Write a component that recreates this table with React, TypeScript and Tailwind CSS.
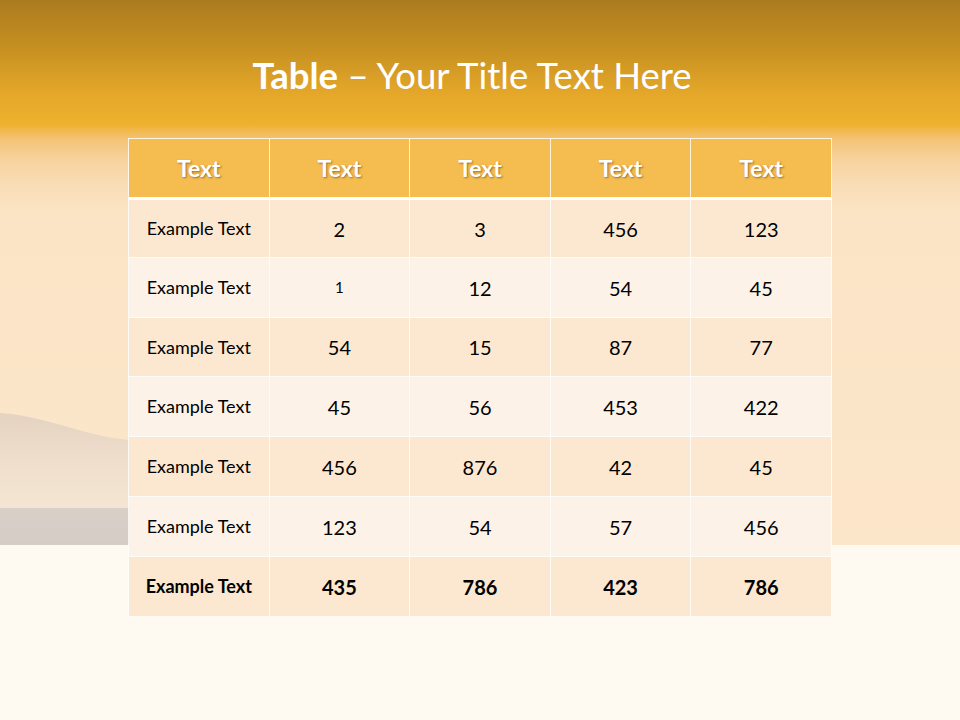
import React from "react";

const rows = [
  ["Example Text", "2", "3", "456", "123"],
  ["Example Text", "1", "12", "54", "45"],
  ["Example Text", "54", "15", "87", "77"],
  ["Example Text", "45", "56", "453", "422"],
  ["Example Text", "456", "876", "42", "45"],
  ["Example Text", "123", "54", "57", "456"],
];

const rowHeights = ["h-[59px]", "h-[60px]", "h-[59px]", "h-[60px]", "h-[60px]", "h-[60px]"];

const total = ["Example Text", "435", "786", "423", "786"];

function Hills() {
  return (
    <svg className="absolute left-0 top-[400px]" width="140" height="150" viewBox="0 0 140 150">
      <defs>
        <linearGradient id="hill" x1="0" y1="0" x2="0" y2="1">
          <stop offset="0" stopColor="#e4d3c1" />
          <stop offset="0.5" stopColor="#eedecb" />
          <stop offset="1" stopColor="#f5e6d4" />
        </linearGradient>
        <linearGradient id="band" x1="0" y1="0" x2="0" y2="1">
          <stop offset="0" stopColor="#d9d1c8" />
          <stop offset="1" stopColor="#d4cdc6" />
        </linearGradient>
      </defs>
      <path d="M0 13 C 30 15, 60 25, 90 33 C 110 38, 125 40, 140 41 L140 110 L0 110 Z" fill="url(#hill)" />
      <rect x="0" y="108" width="140" height="37" fill="url(#band)" />
    </svg>
  );
}

export default function App() {
  return (
    <div className="relative w-[960px] h-[720px] overflow-hidden bg-[#fefaf2] font-['Lato',sans-serif]">
      {/* backdrop */}
      <div className="absolute inset-x-0 top-0 h-[545px] bg-[linear-gradient(to_bottom,#ab7b1f_0px,#c48e20_45px,#e5a82a_95px,#efb02e_124px,#f4c477_140px,#f7d39e_160px,#f9ddb6_185px,#fbe4c6_215px,#fce6ca_545px)]" />
      <Hills />

      <div className="relative flex flex-col items-center">
        <h1 className="mt-[52px] mr-[16px] h-[46px] text-[36.5px] leading-[46px] text-white">
          <span className="font-bold">Table</span> – Your Title Text Here
        </h1>

        <table className="mt-[40px] w-[704px] border-collapse table-fixed">
          <thead>
            <tr className="h-[60px] bg-[#f5bd50]">
              {[0, 1, 2, 3, 4].map((i) => (
                <th
                  key={i}
                  className="border border-white/80 border-b-[3px] border-b-white text-[23px] font-bold text-white [text-shadow:1px_1px_2px_rgba(90,50,0,0.55)]"
                >
                  Text
                </th>
              ))}
            </tr>
          </thead>
          <tbody>
            {rows.map((r, ri) => (
              <tr key={ri} className={(ri % 2 === 0 ? "bg-[#fce8d0] " : "bg-[#fcf2e7] ") + rowHeights[ri]}>
                {r.map((c, ci) => (
                  <td
                    key={ci}
                    className={
                      ci === 0
                        ? "border border-white/80 text-center text-[18px] text-black"
                        : c === "1"
                        ? "border border-white/80 text-center text-[15px] text-black"
                        : "border border-white/80 text-center text-[20px] text-black"
                    }
                  >
                    {c}
                  </td>
                ))}
              </tr>
            ))}
            <tr className="h-[60px] bg-[#fce8d0]">
              {total.map((c, ci) => (
                <td
                  key={ci}
                  className={
                    ci === 0
                      ? "border border-white/80 text-center text-[18px] font-bold text-black"
                      : "border border-white/80 text-center text-[20px] font-bold text-black"
                  }
                >
                  {c}
                </td>
              ))}
            </tr>
          </tbody>
        </table>
      </div>
    </div>
  );
}
